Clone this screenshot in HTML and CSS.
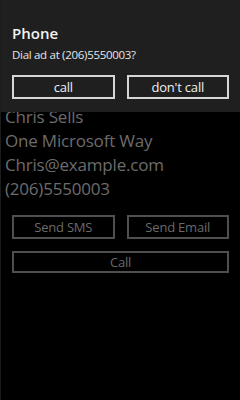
FILE: index.html
```html
<!DOCTYPE html>
<html>
<head>
<meta charset="utf-8">
<link rel="stylesheet" href="styles.css">
</head>
<body>
<div class="screen">
  <div class="content">
    <div class="details">
      <div class="line">Chris Sells</div>
      <div class="line">One Microsoft Way</div>
      <div class="line">Chris@example.com</div>
      <div class="line">(206)5550003</div>
    </div>
    <div class="actions">
      <div class="row">
        <div class="btn">Send SMS</div>
        <div class="btn">Send Email</div>
      </div>
      <div class="btn wide">Call</div>
    </div>
  </div>
  <div class="dialog">
    <div class="title">Phone</div>
    <div class="message">Dial ad at (206)5550003?</div>
    <div class="dbuttons">
      <div class="dbtn">call</div>
      <div class="dbtn">don't call</div>
    </div>
  </div>
</div>
</body>
</html>
```
FILE: styles.css
```css
html, body {
  margin: 0;
  padding: 0;
  background: #000;
}
body {
  width: 240px;
  height: 400px;
  overflow: hidden;
  font-family: "Open Sans", "Noto Sans", sans-serif;
}
.screen {
  position: relative;
  width: 240px;
  height: 400px;
  box-sizing: border-box;
  border-left: 1px solid #1c1c1c;
}
.content {
  padding-top: 105px;
  display: flex;
  flex-direction: column;
}
.details {
  padding-left: 4px;
  display: flex;
  flex-direction: column;
}
.line {
  font-size: 17px;
  line-height: 24px;
  height: 24px;
  color: #6c6c6c;
  white-space: nowrap;
  letter-spacing: -0.2px;
}
.actions {
  margin-top: 14px;
  padding-left: 11px;
  padding-right: 11px;
  display: flex;
  flex-direction: column;
  gap: 12px;
}
.row {
  display: flex;
  gap: 12px;
}
.btn {
  flex: 1;
  height: 24px;
  box-sizing: border-box;
  border: 2px solid #4f4f4f;
  color: #6a6a6a;
  font-size: 13px;
  letter-spacing: -0.2px;
  display: flex;
  align-items: center;
  justify-content: center;
}
.dialog {
  position: absolute;
  top: 0;
  left: 0;
  right: 0;
  height: 112px;
  background: #1f1f1f;
  padding: 24px 11px 0 11px;
  box-sizing: border-box;
  display: flex;
  flex-direction: column;
}
.title {
  color: #f2f2f2;
  font-size: 15px;
  font-weight: 600;
  line-height: 18px;
}
.message {
  color: #e6e6e6;
  font-size: 11.5px;
  letter-spacing: -0.3px;
  line-height: 16px;
  margin-top: 5px;
}
.dbuttons {
  margin-top: 12px;
  display: flex;
  gap: 12px;
}
.dbtn {
  flex: 1;
  height: 24px;
  box-sizing: border-box;
  border: 2px solid #d6d6d6;
  color: #f0f0f0;
  font-size: 13px;
  letter-spacing: -0.2px;
  display: flex;
  align-items: center;
  justify-content: center;
}
```
